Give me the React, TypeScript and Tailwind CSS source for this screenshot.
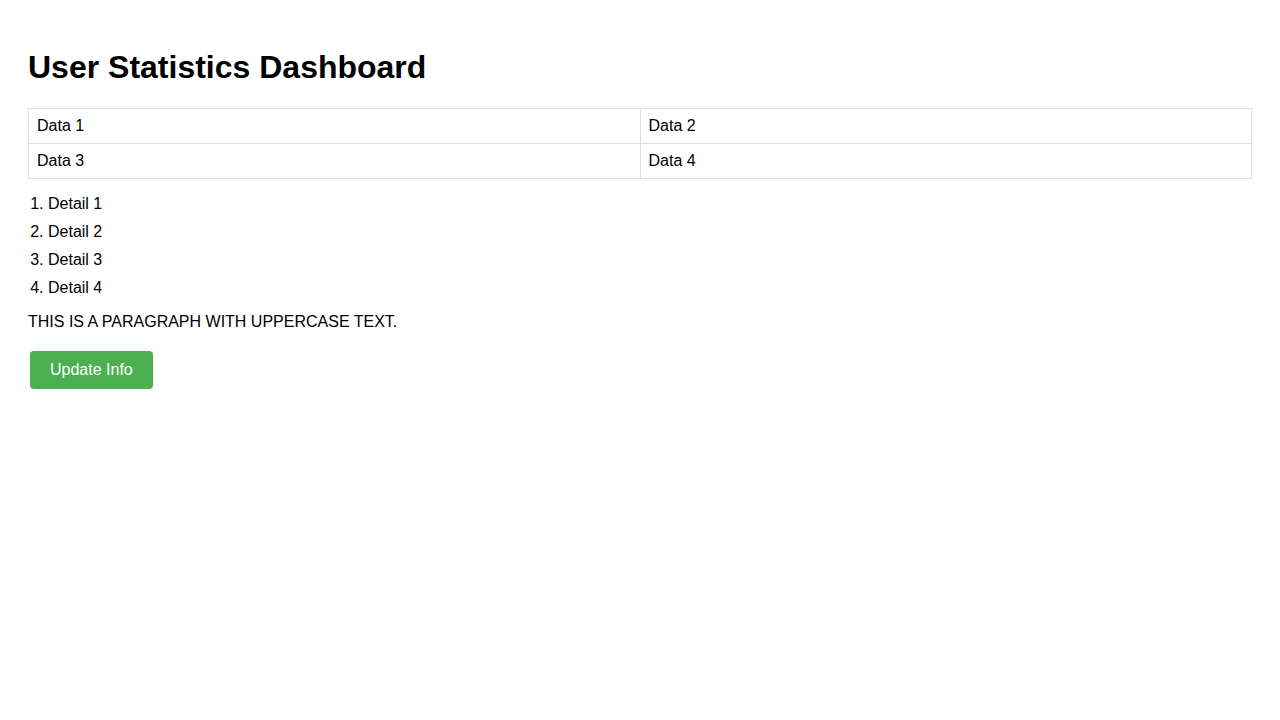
import React from 'react';

const rows = [
  ['Data 1', 'Data 2'],
  ['Data 3', 'Data 4'],
];

const details = ['Detail 1', 'Detail 2', 'Detail 3', 'Detail 4'];

export default function App() {
  return (
    <div className="min-h-screen bg-white p-[28px] text-[16px] text-black font-['Liberation_Sans',Arial,sans-serif]">
      {/* Header */}
      <h1 className="mt-[21px] mb-[22px] text-[32px] font-bold leading-[37px]">User Statistics Dashboard</h1>

      {/* Data table */}
      <table className="w-full border-collapse">
        <tbody>
          {rows.map((row, i) => (
            <tr key={i}>
              {row.map((cell) => (
                <td key={cell} className="w-1/2 border border-[#ddd] px-2 py-2 leading-[18px]">
                  {cell}
                </td>
              ))}
            </tr>
          ))}
        </tbody>
      </table>

      {/* Details */}
      <ol className="mt-[16px] list-decimal pl-[20px]">
        {details.map((d) => (
          <li key={d} className="mb-[10px] leading-[18px]">
            {d}
          </li>
        ))}
      </ol>

      <p className="mt-[16px] uppercase leading-[18px]">This is a paragraph with uppercase text.</p>

      <button className="mt-[20px] ml-[2px] h-[38px] rounded-[4px] bg-[#4CAF50] px-5 text-white leading-[18px]">
        Update Info
      </button>
    </div>
  );
}
